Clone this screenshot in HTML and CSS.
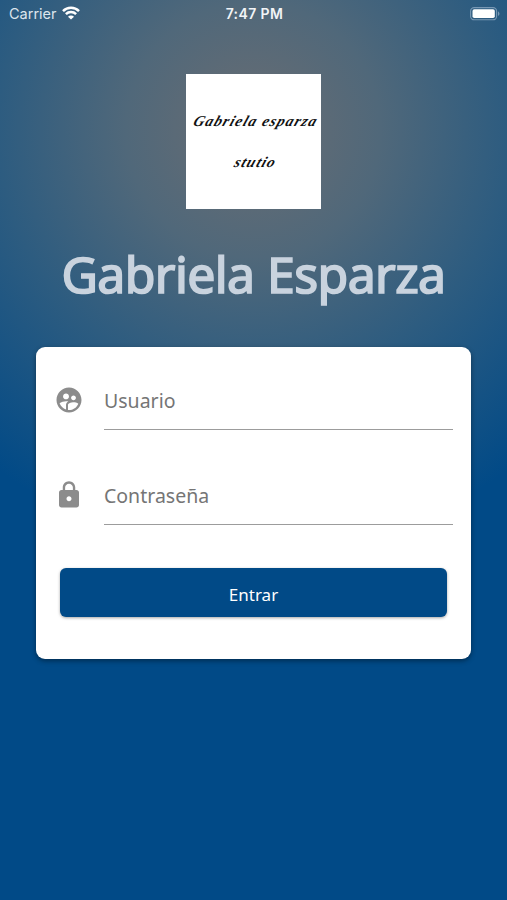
FILE: index.html
```html
<!DOCTYPE html>
<html lang="es">
<head>
<meta charset="utf-8">
<meta name="viewport" content="width=device-width, initial-scale=1">
<title>Gabriela Esparza</title>
<link rel="stylesheet" href="styles.css">
</head>
<body>
<header class="status">
  <div class="carrier"><span>Carrier</span>
    <svg class="wifi" viewBox="0 0 18 14" width="18" height="14" fill="none" stroke="#fff" stroke-width="2.5"><path d="M1 5.1a11.3 11.3 0 0 1 16 0M3.900 8.200a7.200 7.200 0 0 1 10.200 0"/><path d="M9 13.600 6 10.700a4.200 4.200 0 0 1 6 0z" fill="#fff" stroke="none"/></svg>
  </div>
  <time>7:47 PM</time>
  <svg class="battery" viewBox="0 0 30 14" width="30" height="14"><rect x=".6" y=".6" width="26" height="12.200" rx="3.600" fill="none" stroke="#7898b4" stroke-width="1.100"/><rect x="2.500" y="2.300" width="22.300" height="8.800" rx="1.800" fill="#fff"/><path d="M28 4.300q3 2.400 0 4.800z" fill="#7898b4"/></svg>
</header>
<main>
  <div class="logo"><span class="logo-name">Gabriela esparza</span><span class="logo-sub">stutio</span></div>
  <h1>Gabriela Esparza</h1>
  <form class="card">
    <label class="field">
      <svg viewBox="0 0 24 24" width="30" height="30" fill="#8c8c8c"><path d="M12 2C6.48 2 2 6.48 2 12s4.480 10 10 10 10-4.480 10-10S17.520 2 12 2zm3.610 6.340c1.070 0 1.930.860 1.930 1.930s-.860 1.930-1.930 1.930-1.930-.860-1.930-1.930c-.010-1.070.860-1.930 1.930-1.930zm-6-1.580c1.300 0 2.360 1.060 2.360 2.360s-1.060 2.360-2.360 2.360-2.360-1.060-2.360-2.360 1.050-2.360 2.360-2.360zm0 9.130v3.750c-2.400-.750-4.300-2.600-5.140-4.960 1.050-1.120 3.670-1.690 5.140-1.690.530 0 1.200.080 1.900.220-1.640.870-1.900 2.020-1.900 2.680zM12 20c-.270 0-.530-.010-.790-.040v-4.070c0-1.420 2.940-2.130 4.400-2.130 1.070 0 2.920.390 3.840 1.150C18.280 17.880 15.390 20 12 20z"/></svg>
      <span class="input">Usuario</span>
    </label>
    <label class="field">
      <svg viewBox="0 0 24 24" width="30" height="30" fill="#8c8c8c"><path d="M18 8h-1V6c0-2.760-2.240-5-5-5S7 3.240 7 6v2H6c-1.100 0-2 .900-2 2v10c0 1.100.900 2 2 2h12c1.100 0 2-.900 2-2V10c0-1.100-.900-2-2-2zm-6 9c-1.100 0-2-.900-2-2s.900-2 2-2 2 .900 2 2-.900 2-2 2zm3.100-9H8.900V6c0-1.710 1.390-3.100 3.100-3.100s3.100 1.390 3.100 3.100v2z"/></svg>
      <span class="input">Contraseña</span>
    </label>
    <button type="button">Entrar</button>
  </form>
</main>
</body>
</html>
```
FILE: styles.css
```css
* { box-sizing: border-box; }
body {
  margin: 0;
  height: 900px;
  overflow: hidden;
  font-family: "Noto Sans", "Open Sans", sans-serif;
  background: #014a87 radial-gradient(circle 425px at 253px 130px, #6a6d72 0%, #50687a 30%, #2d5c80 60%, #014a87 100%) no-repeat;
}
.status {
  height: 28px;
  padding: 0 7px 0 9px;
  display: grid;
  grid-template-columns: 1fr auto 1fr;
  align-items: center;
  color: #f1f4f7;
  font: 14.5px/28px Inter, sans-serif;
}
.carrier { display: flex; align-items: center; gap: 5px; color: #dce5ed; }
.wifi { margin-top: -2px; }
.status time { font-weight: 600; font-size: 14px; letter-spacing: .4px; }
.battery { justify-self: end; }
main { display: flex; flex-direction: column; align-items: center; }
.logo {
  width: 135px;
  height: 135px;
  margin-top: 46px;
  background: #fff;
  color: #111;
  display: flex;
  flex-direction: column;
  align-items: center;
  padding: 34px 0 0 5px;
  font: italic bold 15px/26px "Liberation Serif", serif;
  white-space: nowrap;
}
.logo span { transform: skewX(-20deg); }
.logo-name { letter-spacing: 1.2px; }
.logo-sub { margin-top: 15px; letter-spacing: 1.2px; }
h1 {
  margin: 31px 0 0;
  font-size: 50px;
  line-height: 68px;
  font-weight: 400;
  color: #c9d3de;
  -webkit-text-stroke: 1.700px #c9d3de;
  letter-spacing: -.600px;
  white-space: nowrap;
}
.card {
  width: 435px;
  height: 312px;
  margin-top: 39px;
  border-radius: 9px;
  background: #fff;
  box-shadow: 0 2px 5px rgba(0, 0, 0, .4);
  padding: 26px 18px 0;
}
.field { display: flex; align-items: flex-start; height: 95px; }
.field svg { margin: 12px 20px 0 0; flex: none; }
.input {
  width: 350px;
  height: 57px;
  border-bottom: 1px solid #9c9c9c;
  color: #757575;
  font-size: 19.500px;
  line-height: 56px;
}
button {
  display: block;
  width: 387px;
  height: 49px;
  margin: 5px 0 0 6px;
  border: 0;
  border-radius: 6px;
  background: #014a87;
  color: #fff;
  font: 17px/47px "Noto Sans", sans-serif;
  padding: 3px 0 0;
  box-shadow: 0 1px 3px rgba(0, 0, 0, .35);
}
```
